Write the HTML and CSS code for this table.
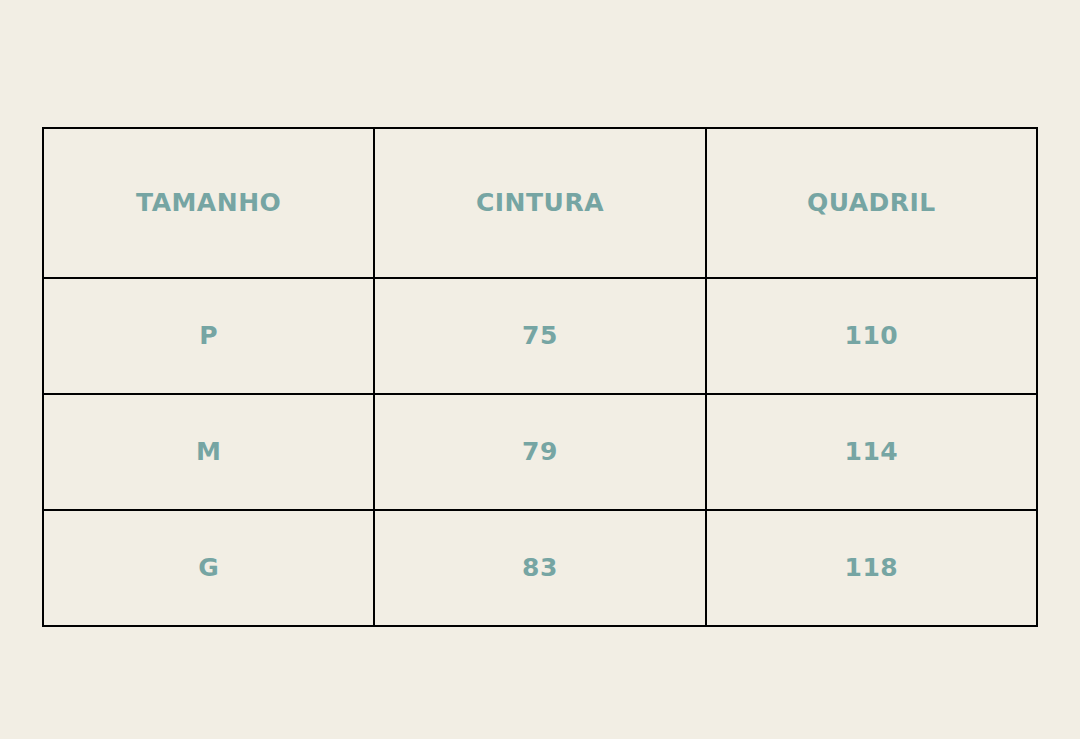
FILE: index.html
```html
<!DOCTYPE html>
<html lang="pt">
<head>
<meta charset="utf-8">
<title>Tabela de medidas</title>
<link rel="stylesheet" href="styles.css">
</head>
<body>
<main class="page">
  <table class="sizes">
    <thead>
      <tr class="head-row"><th>TAMANHO</th><th>CINTURA</th><th>QUADRIL</th></tr>
    </thead>
    <tbody>
      <tr><td>P</td><td>75</td><td>110</td></tr>
      <tr><td>M</td><td>79</td><td>114</td></tr>
      <tr><td>G</td><td>83</td><td>118</td></tr>
    </tbody>
  </table>
</main>
</body>
</html>
```
FILE: styles.css
```css
html, body {
  margin: 0;
  padding: 0;
  background: #f2eee4;
}
.page {
  padding: 127px 42px 0 42px;
}
.sizes {
  width: 100%;
  border-collapse: collapse;
  table-layout: fixed;
  font-family: "DejaVu Sans", sans-serif;
  font-weight: bold;
  font-size: 25px;
  letter-spacing: 0.5px;
  color: #76a5a3;
}
.sizes th, .sizes td {
  border: 2px solid #000;
  text-align: center;
  vertical-align: middle;
  padding: 0 0 2px 0;
}
.head-row th {
  height: 146px;
}
.sizes td {
  height: 112px;
}
```
